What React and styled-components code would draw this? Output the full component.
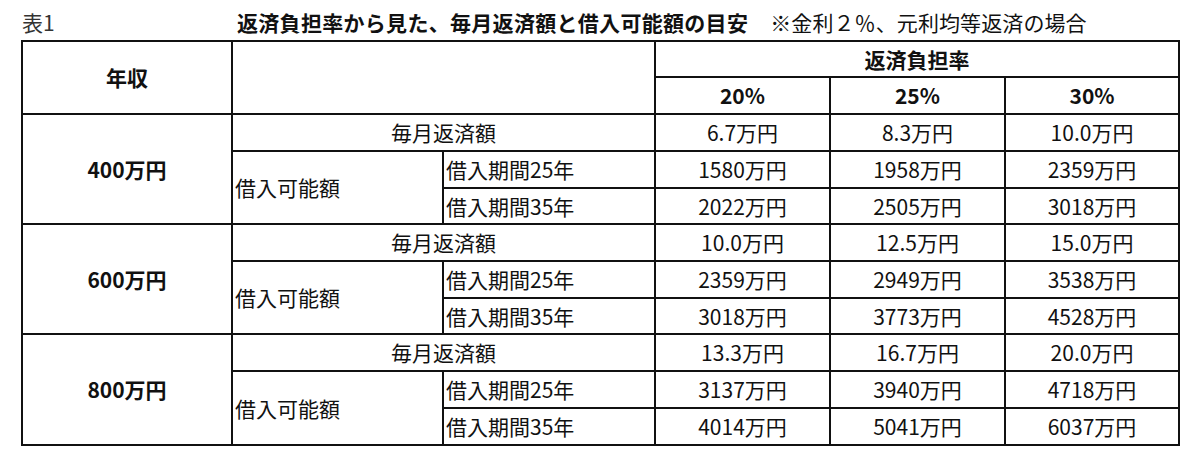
import React from "react";
import styled, { createGlobalStyle } from "styled-components";

const Global = createGlobalStyle`
  html, body { margin: 0; padding: 0; background: #fff; }
  body {
    font-family: "Noto Sans CJK JP", "Noto Sans", sans-serif;
    color: #111;
  }
`;

const Page = styled.div`
  width: 1200px;
  height: 464px;
  padding: 8px 0 0 21px;
  box-sizing: border-box;
`;

const Caption = styled.div`
  display: flex;
  align-items: center;
  height: 28px;
  margin-bottom: 4px;
  font-size: 21px;
  line-height: 28px;
  white-space: nowrap;
`;

const Label = styled.span`
  width: 215px;
  padding-left: 1px;
  color: #333;
`;

const Title = styled.span`
  font-weight: 700;
  letter-spacing: 0.3px;
  margin-right: 22px;
`;

const Note = styled.span`
  font-weight: 400;
  letter-spacing: 0.1px;
`;

const Table = styled.table`
  border-collapse: collapse;
  table-layout: fixed;
  width: 1157px;
  font-size: 21px;
  line-height: 1;
`;

const Row = styled.tr`
  height: ${(p) => p.$h}px;
`;

const Cell = styled.td`
  border: 2px solid #111;
  padding: ${(p) => (p.$align === "left" ? "0 0 0 2px" : "0")};
  text-align: ${(p) => p.$align || "center"};
  font-weight: ${(p) => (p.$bold ? 700 : 400)};
  vertical-align: middle;
  white-space: nowrap;
`;

const data = [
  {
    income: "400万円",
    monthly: ["6.7万円", "8.3万円", "10.0万円"],
    y25: ["1580万円", "1958万円", "2359万円"],
    y35: ["2022万円", "2505万円", "3018万円"],
  },
  {
    income: "600万円",
    monthly: ["10.0万円", "12.5万円", "15.0万円"],
    y25: ["2359万円", "2949万円", "3538万円"],
    y35: ["3018万円", "3773万円", "4528万円"],
  },
  {
    income: "800万円",
    monthly: ["13.3万円", "16.7万円", "20.0万円"],
    y25: ["3137万円", "3940万円", "4718万円"],
    y35: ["4014万円", "5041万円", "6037万円"],
  },
];

const heights = [
  [37, 37, 36],
  [37, 37, 36],
  [37, 37, 37],
];

export default function App() {
  return (
    <Page>
      <Global />
      <Caption>
        <Label>表1</Label>
        <Title>返済負担率から見た、毎月返済額と借入可能額の目安</Title>
        <Note>※金利２％、元利均等返済の場合</Note>
      </Caption>
      <Table>
        <colgroup>
          <col style={{ width: 210 }} />
          <col style={{ width: 211 }} />
          <col style={{ width: 212 }} />
          <col style={{ width: 175 }} />
          <col style={{ width: 175 }} />
          <col style={{ width: 174 }} />
        </colgroup>
        <tbody>
          <Row $h={36}>
            <Cell rowSpan={2} $bold>年収</Cell>
            <Cell rowSpan={2} colSpan={2} />
            <Cell colSpan={3} $bold>返済負担率</Cell>
          </Row>
          <Row $h={37}>
            <Cell $bold>20%</Cell>
            <Cell $bold>25%</Cell>
            <Cell $bold>30%</Cell>
          </Row>
          {data.map((d, i) => (
            <React.Fragment key={d.income}>
              <Row $h={heights[i][0]}>
                <Cell rowSpan={3} $bold>{d.income}</Cell>
                <Cell colSpan={2}>毎月返済額</Cell>
                {d.monthly.map((v, j) => (
                  <Cell key={j}>{v}</Cell>
                ))}
              </Row>
              <Row $h={heights[i][1]}>
                <Cell rowSpan={2} $align="left">借入可能額</Cell>
                <Cell $align="left">借入期間25年</Cell>
                {d.y25.map((v, j) => (
                  <Cell key={j}>{v}</Cell>
                ))}
              </Row>
              <Row $h={heights[i][2]}>
                <Cell $align="left">借入期間35年</Cell>
                {d.y35.map((v, j) => (
                  <Cell key={j}>{v}</Cell>
                ))}
              </Row>
            </React.Fragment>
          ))}
        </tbody>
      </Table>
    </Page>
  );
}
